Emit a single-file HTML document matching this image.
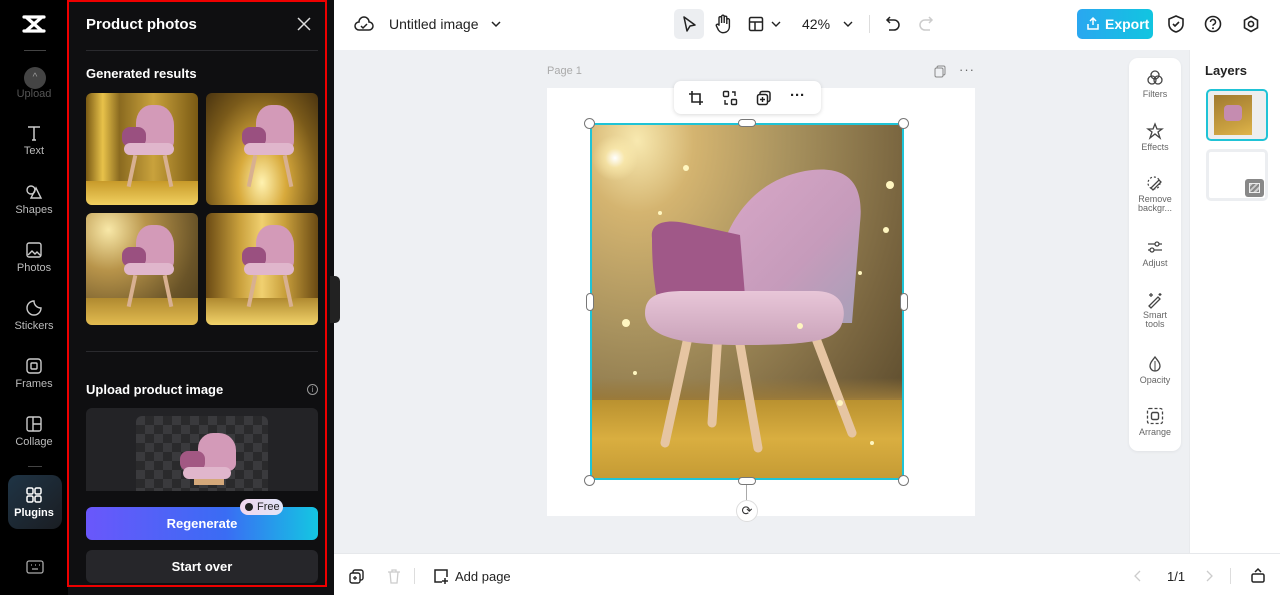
<!DOCTYPE html>
<html><head><meta charset="utf-8"><style>
*{margin:0;padding:0;box-sizing:border-box}
body{width:1280px;height:595px;overflow:hidden;position:relative;font-family:"Liberation Sans",sans-serif;background:#eef0f3}
.abs{position:absolute}
.side{left:0;top:0;width:68px;height:595px;background:#000}
.si{position:absolute;left:0;width:68px;text-align:center;color:#bbb;font-size:11px}
.si svg{display:block;margin:0 auto 3px}
.panel{left:68px;top:0;width:266px;height:595px;background:#0f0f11}
.red{left:67px;top:0;width:260px;height:587px;border:2px solid #e00;}
.thumb{position:absolute;width:112px;height:112px;border-radius:6px;overflow:hidden}
.chair{position:absolute}
.top{left:334px;top:0;width:946px;height:50px;background:#fff}
.bot{left:334px;top:553px;width:946px;height:42px;background:#fff;border-top:1px solid #e6e8eb}
.tool{position:absolute;left:0;width:52px;text-align:center;font-size:9px;color:#666}
.tool svg{display:block;margin:0 auto 2px}
.h{position:absolute;width:11px;height:11px;border-radius:50%;background:#fff;border:1px solid #777}
</style></head><body>
<div class="abs side">
 <svg class="abs" style="left:22px;top:14px" width="24" height="20" viewBox="0 0 24 20"><path d="M2 3h20M2 17h20M4 3l16 14M20 3L4 17" stroke="#fff" stroke-width="3.2" fill="none" stroke-linecap="round"/></svg>
 <div class="abs" style="left:24px;top:50px;width:22px;height:1px;background:#444"></div>
 <div class="abs" style="left:24px;top:67px;width:22px;height:22px;border-radius:50%;background:#444;color:#999;font-size:10px;text-align:center;line-height:22px">^</div>
 <div class="si" style="top:88px;color:#555">Upload</div>
 <div class="si" style="top:124px"><svg width="18" height="18" viewBox="0 0 18 18"><path d="M3 3h12M9 3v13M7 16h4" stroke="#ccc" stroke-width="1.5" fill="none"/></svg>Text</div>
 <div class="si" style="top:183px"><svg width="18" height="18" viewBox="0 0 18 18"><circle cx="6" cy="7" r="4" stroke="#ccc" stroke-width="1.4" fill="none"/><path d="M11 5l5 10H6z" stroke="#ccc" stroke-width="1.4" fill="none"/></svg>Shapes</div>
 <div class="si" style="top:241px"><svg width="18" height="18" viewBox="0 0 18 18"><rect x="2" y="2" width="14" height="14" rx="2" stroke="#ccc" stroke-width="1.4" fill="none"/><path d="M3 14l4-4 3 3 2-2 4 4" stroke="#ccc" stroke-width="1.4" fill="none"/></svg>Photos</div>
 <div class="si" style="top:299px"><svg width="18" height="18" viewBox="0 0 18 18"><path d="M9 2a7 7 0 1 0 7 7c-4 0-7-3-7-7z" stroke="#ccc" stroke-width="1.4" fill="none"/></svg>Stickers</div>
 <div class="si" style="top:357px"><svg width="18" height="18" viewBox="0 0 18 18"><rect x="2" y="2" width="14" height="14" rx="3" stroke="#ccc" stroke-width="1.4" fill="none"/><rect x="6" y="6" width="6" height="6" rx="1" stroke="#ccc" stroke-width="1.4" fill="none"/></svg>Frames</div>
 <div class="si" style="top:415px"><svg width="18" height="18" viewBox="0 0 18 18"><rect x="2" y="2" width="14" height="14" rx="2" stroke="#ccc" stroke-width="1.4" fill="none"/><path d="M8 2v14M8 9h8" stroke="#ccc" stroke-width="1.4"/></svg>Collage</div>
 <div class="abs" style="left:28px;top:466px;width:14px;height:1px;background:#444"></div>
 <div class="abs" style="left:8px;top:475px;width:54px;height:54px;border-radius:10px;background:linear-gradient(135deg,#1f3445,#1a1d22)"></div>
 <div class="si" style="top:486px;color:#fff;font-weight:bold"><svg width="18" height="18" viewBox="0 0 18 18"><rect x="2" y="2" width="6" height="6" rx="1.5" stroke="#fff" stroke-width="1.5" fill="none"/><rect x="10" y="2" width="6" height="6" rx="1.5" stroke="#fff" stroke-width="1.5" fill="none"/><rect x="2" y="10" width="6" height="6" rx="1.5" stroke="#fff" stroke-width="1.5" fill="none"/><rect x="10" y="10" width="6" height="6" rx="1.5" stroke="#fff" stroke-width="1.5" fill="none"/></svg>Plugins</div>
 <svg class="abs" style="left:26px;top:560px" width="18" height="15" viewBox="0 0 18 15"><rect x="1" y="1" width="16" height="12" rx="2" stroke="#aaa" stroke-width="1.3" fill="none"/><path d="M5 5h1M9 5h1M13 5h1M6 9h6" stroke="#aaa" stroke-width="1.3"/></svg>
</div>
<div class="abs panel">
 <div class="abs" style="left:18px;top:16px;color:#fff;font-weight:bold;font-size:15px">Product photos</div>
 <svg class="abs" style="left:229px;top:17px" width="14" height="14"><path d="M1 1l12 12M13 1L1 13" stroke="#ddd" stroke-width="1.5"/></svg>
 <div class="abs" style="left:18px;top:50px;width:232px;height:1px;background:#2a2a2e"></div>
 <div class="abs" style="left:18px;top:66px;color:#fff;font-weight:bold;font-size:13px">Generated results</div>
 <div class="abs" style="left:18px;top:351px;width:232px;height:1px;background:#2a2a2e"></div>
 <div class="abs" style="left:18px;top:382px;color:#fff;font-weight:bold;font-size:13px">Upload product image</div>
 <div class="abs" style="left:239px;top:384px;width:11px;height:11px;border-radius:50%;border:1px solid #999;color:#999;font-size:8px;text-align:center;line-height:10px">i</div>
 <div class="abs" style="left:18px;top:408px;width:232px;height:83px;background:#232326;border-radius:6px 6px 0 0"></div>
 <div class="abs" style="left:68px;top:416px;width:132px;height:75px;border-radius:6px 6px 0 0;background-color:#3a3a3d;background-image:linear-gradient(45deg,#2a2a2c 25%,transparent 25%,transparent 75%,#2a2a2c 75%),linear-gradient(45deg,#2a2a2c 25%,transparent 25%,transparent 75%,#2a2a2c 75%);background-size:18px 18px;background-position:0 0,9px 9px"></div>
 <div class="abs" style="left:112px;top:433px;width:60px;height:52px;">
  <div class="chair" style="left:18px;top:0;width:38px;height:38px;border-radius:40% 45% 20% 10%;background:#d39ab8"></div>
  <div class="chair" style="left:0;top:18px;width:25px;height:20px;border-radius:8px;background:#a25883"></div>
  <div class="chair" style="left:3px;top:34px;width:48px;height:12px;border-radius:6px;background:#e0b6cc"></div>
  <div class="chair" style="left:14px;top:46px;width:30px;height:6px;background:#d4a87a"></div>
 </div>
 <div class="abs" style="left:18px;top:507px;width:232px;height:33px;border-radius:6px;background:linear-gradient(90deg,#6a57fb,#3a6cf4 60%,#14c6e2);color:#fff;font-weight:bold;font-size:13px;text-align:center;line-height:33px">Regenerate</div>
 <div class="abs" style="left:172px;top:499px;width:43px;height:16px;border-radius:8px;background:linear-gradient(90deg,#f2d7ee,#dfe4f7);color:#222;font-size:11px;line-height:16px;padding-left:17px"><span style="position:absolute;left:5px;top:4px;width:8px;height:8px;border-radius:50%;background:#222"></span>Free</div>
 <div class="abs" style="left:18px;top:550px;width:232px;height:33px;border-radius:6px;background:#26262a;color:#fff;font-weight:bold;font-size:13px;text-align:center;line-height:33px">Start over</div>
</div>
<div class="abs red"></div>
<div class="abs" style="left:330px;top:276px;width:10px;height:47px;background:#222;border-radius:0 5px 5px 0"></div>
<div class="abs top">
 <svg class="abs" style="left:20px;top:15px" width="20" height="18" viewBox="0 0 20 18"><path d="M5 15a4 4 0 0 1 0-8 5 5 0 0 1 10 0 4 4 0 0 1 0 8z" stroke="#222" stroke-width="1.5" fill="none"/><path d="M7 11l2 2 4-4" stroke="#222" stroke-width="1.5" fill="none"/></svg>
 <div class="abs" style="left:55px;top:16px;font-size:14px;color:#222">Untitled image</div>
 <svg class="abs" style="left:157px;top:20px" width="10" height="8"><path d="M1 2l4 4 4-4" stroke="#222" stroke-width="1.5" fill="none"/></svg>
 <div class="abs" style="left:340px;top:9px;width:30px;height:30px;border-radius:5px;background:#eceef1"></div>
 <svg class="abs" style="left:347px;top:15px" width="16" height="18"><path d="M3 2l11 8-5 1-3 5z" stroke="#222" stroke-width="1.5" fill="none" stroke-linejoin="round"/></svg>
 <svg class="abs" style="left:380px;top:14px" width="18" height="20" viewBox="0 0 18 20"><path d="M5 11V4a1.3 1.3 0 0 1 2.6 0v5V2.5a1.3 1.3 0 0 1 2.6 0V9V3.5a1.3 1.3 0 0 1 2.6 0V10V6a1.3 1.3 0 0 1 2.6 0v7a6 6 0 0 1-11 3l-2-4a1.3 1.3 0 0 1 2.4-1z" stroke="#222" stroke-width="1.4" fill="none"/></svg>
 <svg class="abs" style="left:414px;top:16px" width="16" height="16"><rect x="1.5" y="1.5" width="13" height="13" rx="1.5" stroke="#222" stroke-width="1.5" fill="none"/><path d="M1.5 6h13M7 6v8.5" stroke="#222" stroke-width="1.5"/></svg>
 <svg class="abs" style="left:437px;top:21px" width="10" height="7"><path d="M1 1l4 4 4-4" stroke="#222" stroke-width="1.4" fill="none"/></svg>
 <div class="abs" style="left:468px;top:16px;font-size:14px;color:#222">42%</div>
 <svg class="abs" style="left:509px;top:21px" width="10" height="7"><path d="M1 1l4 4 4-4" stroke="#222" stroke-width="1.4" fill="none"/></svg>
 <div class="abs" style="left:535px;top:15px;width:1px;height:18px;background:#ddd"></div>
 <svg class="abs" style="left:551px;top:15px" width="16" height="18"><path d="M5 2L2 5l3 3M2 5h7a5 5 0 0 1 0 10H4" stroke="#222" stroke-width="1.5" fill="none"/></svg>
 <svg class="abs" style="left:584px;top:15px" width="16" height="18"><path d="M11 2l3 3-3 3M14 5H7a5 5 0 0 0 0 10h5" stroke="#ccc" stroke-width="1.5" fill="none"/></svg>
 <div class="abs" style="left:743px;top:9px;width:76px;height:30px;border-radius:5px;background:linear-gradient(90deg,#2aa7f0,#11c5e0);color:#fff;font-weight:bold;font-size:14px;line-height:30px;padding-left:28px">Export</div>
 <svg class="abs" style="left:752px;top:16px" width="14" height="15"><path d="M7 9V2M4 5l3-3 3 3M2 8v5h10V8" stroke="#fff" stroke-width="1.5" fill="none"/></svg>
 <svg class="abs" style="left:833px;top:14px" width="18" height="20"><path d="M9 2l7 3v5c0 4-3 7-7 8-4-1-7-4-7-8V5z" stroke="#222" stroke-width="1.6" fill="none"/><path d="M6 10l2 2 4-4" stroke="#222" stroke-width="1.6" fill="none"/></svg>
 <svg class="abs" style="left:870px;top:15px" width="18" height="18"><circle cx="9" cy="9" r="7.5" stroke="#222" stroke-width="1.6" fill="none"/><path d="M6.5 7a2.5 2.5 0 1 1 3.5 2.3c-.7.3-1 .8-1 1.5" stroke="#222" stroke-width="1.5" fill="none"/><circle cx="9" cy="13.3" r="1" fill="#222"/></svg>
 <svg class="abs" style="left:908px;top:15px" width="18" height="18"><path d="M9 1.5l6.5 3.7v7.6L9 16.5l-6.5-3.7V5.2z" stroke="#222" stroke-width="1.6" fill="none"/><circle cx="9" cy="9" r="2.6" stroke="#222" stroke-width="1.6" fill="none"/></svg>
</div>
<div class="abs" style="left:547px;top:65px;font-size:11px;color:#aaa">Page 1</div>
<svg class="abs" style="left:934px;top:65px" width="12" height="13"><rect x="3" y="1" width="8" height="9" rx="1.5" stroke="#888" fill="none"/><rect x="1" y="3" width="8" height="9" rx="1.5" stroke="#888" fill="#eef0f3"/></svg>
<div class="abs" style="left:959px;top:62px;font-size:13px;color:#666;letter-spacing:1px">···</div>
<div class="abs" style="left:547px;top:88px;width:428px;height:428px;background:#fff"></div>
<div class="abs" style="left:590px;top:123px;width:314px;height:357px;overflow:hidden;background:radial-gradient(ellipse at 15% 5%,#f8e9b0 0%,#d4b470 15%,#a8925e 40%,#7a6640 70%,#4e3f24 100%)">
 <div class="abs" style="left:0;top:275px;width:314px;height:82px;background:linear-gradient(180deg,#b8902f,#d9ae40 50%,#c49a34)"></div>
 <div class="abs" style="left:0;top:255px;width:314px;height:22px;background:linear-gradient(180deg,rgba(0,0,0,0),#9a7a3a)"></div>
 <div class="abs" style="left:2px;top:12px;width:46px;height:46px;border-radius:50%;background:radial-gradient(#fff,rgba(255,240,180,.6) 30%,rgba(255,230,150,0) 70%)"></div>
 <svg class="abs" style="left:0;top:0" width="314" height="357">
  <defs>
   <linearGradient id="bk" x1="0" y1="0" x2="1" y2="1"><stop offset="0" stop-color="#d9a8c8"/><stop offset=".6" stop-color="#c69bbb"/><stop offset="1" stop-color="#a7a0b8"/></linearGradient>
   <linearGradient id="st" x1="0" y1="0" x2="0" y2="1"><stop offset="0" stop-color="#e8c6d8"/><stop offset="1" stop-color="#c9a2b9"/></linearGradient>
  </defs>
  <g stroke="#e6c5a2" stroke-width="9" stroke-linecap="round">
   <path d="M100 205L75 320"/><path d="M148 210L168 325"/><path d="M222 205L262 310"/><path d="M128 210l-6 90"/>
  </g>
  <path d="M125 200C118 140 140 62 215 48C262 40 274 65 270 100L262 200Z" fill="url(#bk)"/>
  <path d="M62 115C60 100 75 96 95 100L150 112L156 185L70 190C63 160 62 135 62 115Z" fill="#a05888"/>
  <path d="M55 190C55 172 70 168 95 168L225 168C255 168 258 190 250 205C240 218 220 222 150 222C80 222 55 210 55 190Z" fill="url(#st)"/>
  <g fill="#fff6c0"><circle cx="96" cy="45" r="3"/><circle cx="300" cy="62" r="4"/><circle cx="296" cy="107" r="3"/><circle cx="36" cy="200" r="4"/><circle cx="210" cy="203" r="3"/><circle cx="250" cy="280" r="3"/><circle cx="282" cy="320" r="2"/><circle cx="45" cy="250" r="2"/><circle cx="70" cy="90" r="2"/><circle cx="270" cy="150" r="2"/></g>
 </svg>
</div>
<div class="abs" style="left:590px;top:123px;width:314px;height:357px;border:2px solid #1fc3d6"></div>
<div class="h" style="left:584px;top:118px"></div><div class="h" style="left:898px;top:118px"></div>
<div class="h" style="left:584px;top:475px"></div><div class="h" style="left:898px;top:475px"></div>
<div class="abs" style="left:738px;top:119px;width:18px;height:8px;border-radius:4px;background:#fff;border:1px solid #777"></div>
<div class="abs" style="left:738px;top:477px;width:18px;height:8px;border-radius:4px;background:#fff;border:1px solid #777"></div>
<div class="abs" style="left:586px;top:293px;width:8px;height:18px;border-radius:4px;background:#fff;border:1px solid #777"></div>
<div class="abs" style="left:900px;top:293px;width:8px;height:18px;border-radius:4px;background:#fff;border:1px solid #777"></div>
<div class="abs" style="left:746px;top:485px;width:1px;height:15px;background:#aaa"></div>
<div class="abs" style="left:736px;top:500px;width:22px;height:22px;border-radius:50%;background:#fff;border:1px solid #ddd;text-align:center;line-height:20px;font-size:13px;color:#333">⟳</div>
<div class="abs" style="left:674px;top:81px;width:147px;height:33px;border-radius:7px;background:#fff;box-shadow:0 1px 4px rgba(0,0,0,.15)">
 <svg class="abs" style="left:14px;top:9px" width="16" height="16"><path d="M4 1v11h11M1 4h11v11" stroke="#222" stroke-width="1.6" fill="none"/></svg>
 <svg class="abs" style="left:48px;top:9px" width="16" height="16"><rect x="1.5" y="1.5" width="5" height="5" rx="1" stroke="#222" stroke-width="1.4" fill="none"/><rect x="9.5" y="9.5" width="5" height="5" rx="1" stroke="#222" stroke-width="1.4" fill="none"/><path d="M10 2h3v4M6 14H3v-4" stroke="#222" stroke-width="1.4" fill="none"/></svg>
 <svg class="abs" style="left:82px;top:9px" width="16" height="16"><rect x="4" y="1.5" width="10" height="10" rx="2" stroke="#222" stroke-width="1.5" fill="none"/><rect x="1.5" y="4.5" width="10" height="10" rx="2" stroke="#222" stroke-width="1.5" fill="#fff"/><path d="M6.5 7v5M4 9.5h5" stroke="#222" stroke-width="1.4"/></svg>
 <div class="abs" style="left:116px;top:6px;font-size:15px;color:#222;font-weight:bold">···</div>
</div>
<div class="abs" style="left:1129px;top:58px;width:52px;height:393px;background:#fff;border-radius:9px;box-shadow:0 1px 3px rgba(0,0,0,.06)">
 <div class="tool" style="top:11px"><svg width="18" height="18"><circle cx="9" cy="6" r="4" stroke="#444" stroke-width="1.3" fill="none"/><circle cx="6" cy="11" r="4" stroke="#444" stroke-width="1.3" fill="none"/><circle cx="12" cy="11" r="4" stroke="#444" stroke-width="1.3" fill="none"/></svg>Filters</div>
 <div class="tool" style="top:64px"><svg width="18" height="18"><path d="M9 2l2 5h5l-4 3 2 6-5-4-5 4 2-6-4-3h5z" stroke="#444" stroke-width="1.3" fill="none"/></svg>Effects</div>
 <div class="tool" style="top:117px;line-height:9px"><svg width="18" height="18"><circle cx="8" cy="8" r="6" stroke="#444" stroke-width="1.2" stroke-dasharray="2 2" fill="none"/><path d="M5 13l8-8 2 2-8 8z" stroke="#444" stroke-width="1.3" fill="#fff"/></svg>Remove<br>backgr...</div>
 <div class="tool" style="top:180px"><svg width="18" height="18"><path d="M2 6h14M2 12h14" stroke="#444" stroke-width="1.3"/><circle cx="11" cy="6" r="2" fill="#fff" stroke="#444" stroke-width="1.3"/><circle cx="6" cy="12" r="2" fill="#fff" stroke="#444" stroke-width="1.3"/></svg>Adjust</div>
 <div class="tool" style="top:233px;line-height:9px"><svg width="18" height="18"><path d="M3 15l9-9 2 2-9 9z" stroke="#444" stroke-width="1.3" fill="none"/><path d="M5 2v4M3 4h4M14 2v3M12.5 3.5h3" stroke="#444" stroke-width="1.2"/></svg>Smart<br>tools</div>
 <div class="tool" style="top:297px"><svg width="18" height="18"><path d="M9 2c3 4 5 6 5 9a5 5 0 0 1-10 0c0-3 2-5 5-9z" stroke="#444" stroke-width="1.3" fill="none"/><path d="M9 6v10" stroke="#444" stroke-width="1"/></svg>Opacity</div>
 <div class="tool" style="top:349px"><svg width="18" height="18"><rect x="1.5" y="1.5" width="15" height="15" rx="2" stroke="#444" stroke-width="1.3" stroke-dasharray="3 2" fill="none"/><rect x="5.5" y="5.5" width="7" height="7" rx="1.5" stroke="#444" stroke-width="1.4" fill="none"/></svg>Arrange</div>
</div>
<div class="abs" style="left:1189px;top:50px;width:91px;height:503px;background:#fff;border-left:1px solid #e8eaed">
 <div class="abs" style="left:15px;top:13px;font-weight:bold;font-size:13px;color:#222">Layers</div>
 <div class="abs" style="left:16px;top:39px;width:62px;height:52px;border:2px solid #1fc3d6;border-radius:5px;background:#eee"></div>
 <div class="abs" style="left:24px;top:45px;width:38px;height:40px;background:linear-gradient(160deg,#a07a30,#c9a040 70%,#e0b54a)"><div class="abs" style="left:10px;top:10px;width:18px;height:16px;background:#c58cb0;border-radius:4px"></div></div>
 <div class="abs" style="left:16px;top:99px;width:62px;height:52px;border:3px solid #eceef1;border-radius:5px;background:#fff"></div>
 <div class="abs" style="left:55px;top:129px;width:19px;height:18px;border-radius:3px;background:#888"><div class="abs" style="left:4px;top:4px;width:11px;height:10px;border:1px solid #eee;background:repeating-linear-gradient(135deg,#ccc 0 2px,#888 2px 4px)"></div></div>
</div>
<div class="abs bot">
 <svg class="abs" style="left:15px;top:15px" width="15" height="15"><rect x="4" y="1" width="10" height="10" rx="2" stroke="#222" stroke-width="1.4" fill="none"/><rect x="1" y="4" width="10" height="10" rx="2" stroke="#222" stroke-width="1.4" fill="#fff"/><path d="M6 7v4M4 9h4" stroke="#222" stroke-width="1.3"/></svg>
 <svg class="abs" style="left:53px;top:15px" width="14" height="15"><path d="M1 3h12M5 3V1h4v2M3 3l1 11h6l1-11" stroke="#ccc" stroke-width="1.3" fill="none"/></svg>
 <div class="abs" style="left:80px;top:14px;width:1px;height:16px;background:#ddd"></div>
 <svg class="abs" style="left:99px;top:14px" width="16" height="17"><path d="M9 14H2V2h12v7" stroke="#222" stroke-width="1.5" fill="none"/><path d="M12 10v6M9 13h6" stroke="#222" stroke-width="1.5"/></svg>
 <div class="abs" style="left:121px;top:15px;font-size:13px;color:#222">Add page</div>
 <svg class="abs" style="left:800px;top:16px" width="8" height="12"><path d="M6 1L1 6l5 5" stroke="#ccc" stroke-width="1.3" fill="none"/></svg>
 <div class="abs" style="left:833px;top:15px;font-size:13px;color:#222">1/1</div>
 <svg class="abs" style="left:871px;top:16px" width="8" height="12"><path d="M2 1l5 5-5 5" stroke="#ccc" stroke-width="1.3" fill="none"/></svg>
 <div class="abs" style="left:896px;top:14px;width:1px;height:16px;background:#ddd"></div>
 <svg class="abs" style="left:916px;top:13px" width="16" height="17"><rect x="2" y="7" width="12" height="8" rx="1.5" stroke="#222" stroke-width="1.5" fill="none"/><path d="M5 5l3-3 3 3" stroke="#222" stroke-width="1.5" fill="none"/></svg>
</div>
<div class="thumb" style="left:86px;top:93px;background:linear-gradient(90deg,#7a5a14,#e8c24a 15%,#8a6a20 30%,#c9a23c 60%,#7a5a14);"><div class="abs" style="left:0;top:88px;width:112px;height:24px;background:linear-gradient(#c79a2a,#f1d060)"></div><div class="abs" style="left:36px;top:12px;width:60px;height:80px"><div class="chair" style="left:14px;top:0;width:38px;height:45px;border-radius:40% 45% 20% 10%;background:#d39ab8"></div><div class="chair" style="left:0;top:22px;width:24px;height:20px;border-radius:8px;background:#9a5080"></div><div class="chair" style="left:2px;top:38px;width:50px;height:12px;border-radius:6px;background:#e0b6cc"></div><div class="chair" style="left:8px;top:50px;width:4px;height:32px;background:#d8b090;transform:rotate(12deg)"></div><div class="chair" style="left:44px;top:50px;width:4px;height:32px;background:#d8b090;transform:rotate(-12deg)"></div></div></div>
<div class="thumb" style="left:206px;top:93px;background:radial-gradient(ellipse at 50% 80%,#fff2b0,#d8aa3c 30%,#7a5a1a 70%,#4a3410);"><div class="abs" style="left:36px;top:12px;width:60px;height:80px"><div class="chair" style="left:14px;top:0;width:38px;height:45px;border-radius:40% 45% 20% 10%;background:#d39ab8"></div><div class="chair" style="left:0;top:22px;width:24px;height:20px;border-radius:8px;background:#9a5080"></div><div class="chair" style="left:2px;top:38px;width:50px;height:12px;border-radius:6px;background:#e0b6cc"></div><div class="chair" style="left:8px;top:50px;width:4px;height:32px;background:#d8b090;transform:rotate(12deg)"></div><div class="chair" style="left:44px;top:50px;width:4px;height:32px;background:#d8b090;transform:rotate(-12deg)"></div></div></div>
<div class="thumb" style="left:86px;top:213px;background:radial-gradient(ellipse at 20% 15%,#f8e8a8,#b8944a 30%,#6a5428 70%,#4a3a1a);"><div class="abs" style="left:0;top:85px;width:112px;height:27px;background:linear-gradient(#b08a30,#e2bb50)"></div><div class="abs" style="left:36px;top:12px;width:60px;height:80px"><div class="chair" style="left:14px;top:0;width:38px;height:45px;border-radius:40% 45% 20% 10%;background:#d39ab8"></div><div class="chair" style="left:0;top:22px;width:24px;height:20px;border-radius:8px;background:#9a5080"></div><div class="chair" style="left:2px;top:38px;width:50px;height:12px;border-radius:6px;background:#e0b6cc"></div><div class="chair" style="left:8px;top:50px;width:4px;height:32px;background:#d8b090;transform:rotate(12deg)"></div><div class="chair" style="left:44px;top:50px;width:4px;height:32px;background:#d8b090;transform:rotate(-12deg)"></div></div></div>
<div class="thumb" style="left:206px;top:213px;background:linear-gradient(90deg,#6a4a14,#c9a03c 30%,#f0d070 50%,#c9a03c 70%,#6a4a14);"><div class="abs" style="left:0;top:85px;width:112px;height:27px;background:linear-gradient(#b08a30,#f2d36a)"></div><div class="abs" style="left:36px;top:12px;width:60px;height:80px"><div class="chair" style="left:14px;top:0;width:38px;height:45px;border-radius:40% 45% 20% 10%;background:#d39ab8"></div><div class="chair" style="left:0;top:22px;width:24px;height:20px;border-radius:8px;background:#9a5080"></div><div class="chair" style="left:2px;top:38px;width:50px;height:12px;border-radius:6px;background:#e0b6cc"></div><div class="chair" style="left:8px;top:50px;width:4px;height:32px;background:#d8b090;transform:rotate(12deg)"></div><div class="chair" style="left:44px;top:50px;width:4px;height:32px;background:#d8b090;transform:rotate(-12deg)"></div></div></div>
</body></html>
